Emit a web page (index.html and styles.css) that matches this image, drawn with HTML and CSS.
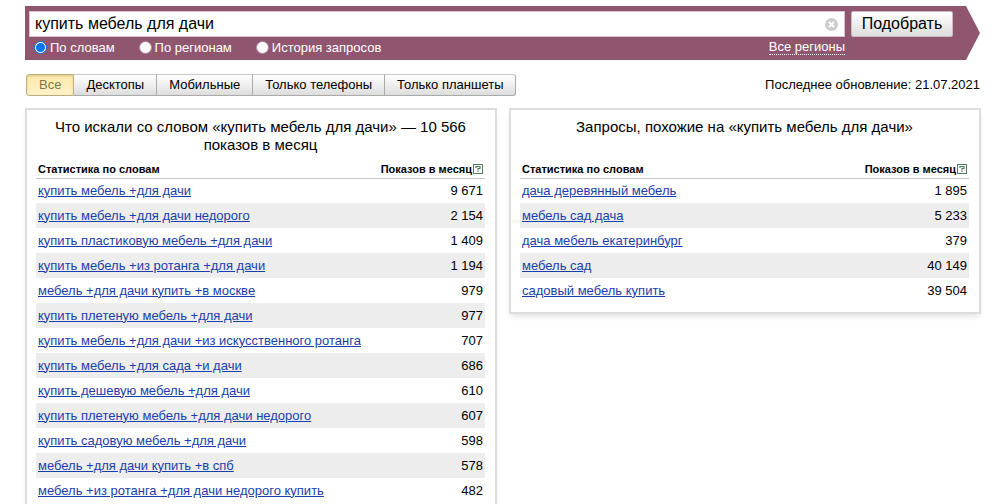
FILE: index.html
```html
<!DOCTYPE html>
<html lang="ru">
<head>
<meta charset="utf-8">
<meta name="viewport" content="width=device-width, initial-scale=1">
<title>Подбор слов</title>
<link rel="stylesheet" href="styles.css">
</head>
<body>
<div class="page">
  <form class="search">
    <div class="search-main">
      <div class="search-field">
        <input class="search-input" type="text" aria-label="Запрос" value="купить мебель для дачи">
        <button class="clear" type="reset" aria-label="Очистить">
          <svg width="13" height="13" viewBox="0 0 13 13"><circle cx="6.5" cy="6.5" r="6.5" fill="#ccc"/><path d="M4 4l5 5M9 4l-5 5" stroke="#fff" stroke-width="2.2"/></svg>
        </button>
      </div>
      <div class="options">
        <label class="option"><input type="radio" name="mode" checked>По словам</label>
        <label class="option"><input type="radio" name="mode">По регионам</label>
        <label class="option"><input type="radio" name="mode">История запросов</label>
        <a class="regions" href="#">Все регионы</a>
      </div>
    </div>
    <button class="submit" type="button">Подобрать</button>
  </form>

  <div class="toolbar">
    <div class="tabs">
      <button class="tab tab-active" type="button">Все</button>
      <button class="tab" type="button">Десктопы</button>
      <button class="tab" type="button">Мобильные</button>
      <button class="tab" type="button">Только телефоны</button>
      <button class="tab" type="button">Только планшеты</button>
    </div>
    <div class="updated">Последнее обновление: 21.07.2021</div>
  </div>

  <main class="panels">
    <section class="panel panel-long">
      <h2 class="title">Что искали со словом «купить мебель для дачи» — 10 566 показов в месяц</h2>
      <table class="stats">
        <thead><tr><th>Статистика по словам</th><th><span class="head">Показов в месяц<a class="help" href="#" aria-label="Справка"><svg width="10" height="10" viewBox="0 0 10 10"><rect x=".5" y=".5" width="9" height="9" fill="#fff" stroke="#4d7d5d"/><path d="M3 4V2.5h4v2H5v2M5 7v1" fill="none" stroke="#4d7d5d" stroke-width="1.2"/></svg></a></span></th></tr></thead>
        <tbody>
          <tr><td><a href="#">купить мебель +для дачи</a></td><td>9 671</td></tr>
          <tr><td><a href="#">купить мебель +для дачи недорого</a></td><td>2 154</td></tr>
          <tr><td><a href="#">купить пластиковую мебель +для дачи</a></td><td>1 409</td></tr>
          <tr><td><a href="#">купить мебель +из ротанга +для дачи</a></td><td>1 194</td></tr>
          <tr><td><a href="#">мебель +для дачи купить +в москве</a></td><td>979</td></tr>
          <tr><td><a href="#">купить плетеную мебель +для дачи</a></td><td>977</td></tr>
          <tr><td><a href="#">купить мебель +для дачи +из искусственного ротанга</a></td><td>707</td></tr>
          <tr><td><a href="#">купить мебель +для сада +и дачи</a></td><td>686</td></tr>
          <tr><td><a href="#">купить дешевую мебель +для дачи</a></td><td>610</td></tr>
          <tr><td><a href="#">купить плетеную мебель +для дачи недорого</a></td><td>607</td></tr>
          <tr><td><a href="#">купить садовую мебель +для дачи</a></td><td>598</td></tr>
          <tr><td><a href="#">мебель +для дачи купить +в спб</a></td><td>578</td></tr>
          <tr><td><a href="#">мебель +из ротанга +для дачи недорого купить</a></td><td>482</td></tr>
        </tbody>
      </table>
    </section>

    <section class="panel">
      <h2 class="title">Запросы, похожие на «купить мебель для дачи»</h2>
      <table class="stats">
        <thead><tr><th>Статистика по словам</th><th><span class="head">Показов в месяц<a class="help" href="#" aria-label="Справка"><svg width="10" height="10" viewBox="0 0 10 10"><rect x=".5" y=".5" width="9" height="9" fill="#fff" stroke="#4d7d5d"/><path d="M3 4V2.5h4v2H5v2M5 7v1" fill="none" stroke="#4d7d5d" stroke-width="1.2"/></svg></a></span></th></tr></thead>
        <tbody>
          <tr><td><a href="#">дача деревянный мебель</a></td><td>1 895</td></tr>
          <tr><td><a href="#">мебель сад дача</a></td><td>5 233</td></tr>
          <tr><td><a href="#">дача мебель екатеринбург</a></td><td>379</td></tr>
          <tr><td><a href="#">мебель сад</a></td><td>40 149</td></tr>
          <tr><td><a href="#">садовый мебель купить</a></td><td>39 504</td></tr>
        </tbody>
      </table>
    </section>
  </main>
</div>
</body>
</html>
```
FILE: styles.css
```css
* { box-sizing: border-box; }

body {
  margin: 0;
  background: #fff;
  color: #000;
  font: 13px/16px "Liberation Sans", Arial, sans-serif;
}

button, input { font-family: inherit; }

.page {
  display: flex;
  flex-direction: column;
  height: 100vh;
  overflow: hidden;
  padding: 6px 20px 0 25px;
}

.search {
  display: flex;
  align-items: flex-start;
  gap: 6px;
  flex: none;
  padding: 5px 27px 2px 4px;
  background: #91566f;
  clip-path: polygon(0 0, calc(100% - 14px) 0, 100% 50%, calc(100% - 14px) 100%, 0 100%);
}

.search-main { flex: 1; }

.search-field {
  display: flex;
  align-items: center;
  height: 26px;
  padding: 0 6px 0 0;
  background: #fff;
  border: 1px solid #d9c3cd;
}

.search-input {
  flex: 1;
  min-width: 0;
  padding: 0 5px;
  border: 0;
  outline: 0;
  background: none;
  color: #000;
  font-size: 16px;
}

.clear {
  display: flex;
  padding: 0;
  border: 0;
  background: none;
}

.options {
  display: flex;
  align-items: center;
  gap: 24px;
  height: 21px;
  padding-left: 5px;
  color: #fff;
}

.option {
  display: flex;
  align-items: center;
  gap: 3px;
}

.option input {
  appearance: none;
  width: 13px;
  height: 13px;
  margin: 0;
  border: 1px solid #a88a99;
  border-radius: 50%;
  background: #fff;
}

.option input:checked {
  border-color: #0075ff;
  background: radial-gradient(circle, #0075ff 4px, #fff 5px);
}

.regions {
  margin-left: auto;
  border-bottom: 1px dotted #fff;
  color: #fff;
  line-height: 14px;
  text-decoration: none;
}

.submit {
  width: 102px;
  height: 26px;
  padding: 0;
  border: 1px solid #c9bcc2;
  border-radius: 2px;
  background: linear-gradient(#fff, #ddd);
  color: #000;
  font-size: 16px;
}

.toolbar {
  display: flex;
  justify-content: space-between;
  flex: none;
  margin-top: 14px;
  padding-left: 1px;
}

.tabs { display: flex; }

.tab {
  height: 22px;
  padding: 0 12px;
  border: 1px solid #aaa;
  border-left: 0;
  border-top-color: #ccc;
  background: linear-gradient(#fff, #ddd);
  color: #000;
  font-size: 13px;
  line-height: 20px;
}

.tab:last-child { border-radius: 0 3px 3px 0; }

.tab-active {
  border: 1px solid #bcae80;
  border-radius: 3px 0 0 3px;
  background: linear-gradient(#ffe9a8, #fff2c8);
  box-shadow: inset 0 1px 2px #d8c48c;
  color: #807454;
}

.updated { line-height: 22px; }

.panels {
  display: grid;
  grid-template-columns: 1fr 1fr;
  gap: 12px;
  flex: 1;
  margin: 12px -1px 0 0;
}

.panel {
  align-self: start;
  padding: 8px 10px 9px 9px;
  border: 2px solid #ddd;
  box-shadow: 0 4px 6px -2px #ddd;
}

.panel-long { min-height: 100%; }

.title {
  min-height: 36px;
  margin: 0;
  padding: 0 12px;
  font-size: 15px;
  font-weight: 400;
  line-height: 18px;
  text-align: center;
}

.stats {
  width: 100%;
  margin-top: 6px;
  border-collapse: collapse;
}

.stats th {
  height: 18px;
  padding: 1px 2px 0;
  border-bottom: 1px solid #ccc;
  font-size: 11px;
  line-height: 16px;
  text-align: left;
}

.stats td {
  height: 25px;
  padding: 0 2px;
}

.stats th:last-child,
.stats td:last-child {
  text-align: right;
  white-space: nowrap;
}

.stats tbody tr:nth-child(even) { background: #ededed; }

.stats a { color: #1a3dac; }

.head {
  display: inline-flex;
  align-items: center;
  gap: 1px;
}

.help { display: flex; }
```
